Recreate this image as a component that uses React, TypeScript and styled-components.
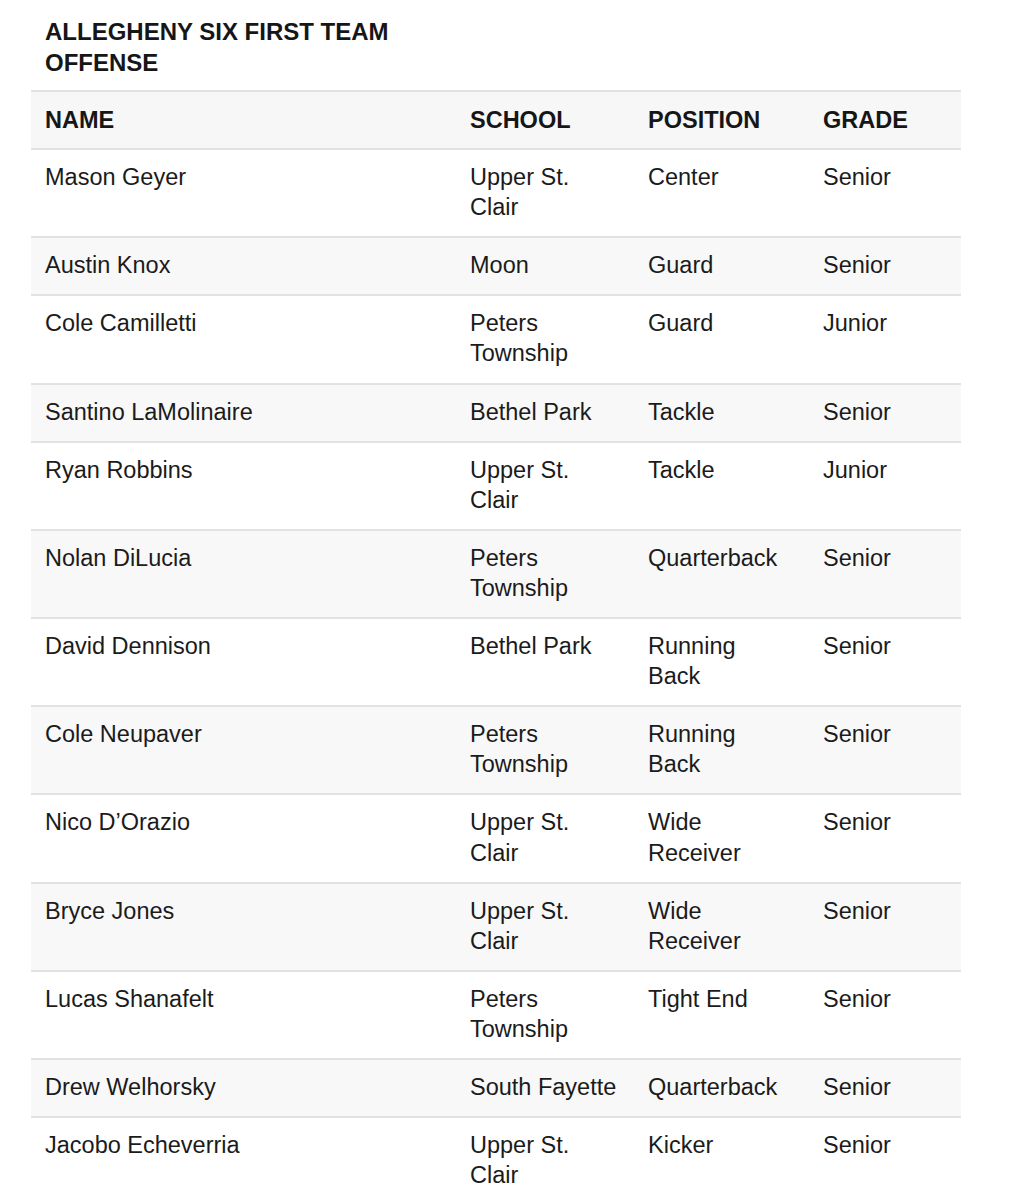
import React from "react";
import styled, { createGlobalStyle } from "styled-components";

interface Player {
  name: string;
  school: string;
  position: string;
  grade: string;
}

const players: Player[] = [
  { name: "Mason Geyer", school: "Upper St. Clair", position: "Center", grade: "Senior" },
  { name: "Austin Knox", school: "Moon", position: "Guard", grade: "Senior" },
  { name: "Cole Camilletti", school: "Peters Township", position: "Guard", grade: "Junior" },
  { name: "Santino LaMolinaire", school: "Bethel Park", position: "Tackle", grade: "Senior" },
  { name: "Ryan Robbins", school: "Upper St. Clair", position: "Tackle", grade: "Junior" },
  { name: "Nolan DiLucia", school: "Peters Township", position: "Quarterback", grade: "Senior" },
  { name: "David Dennison", school: "Bethel Park", position: "Running Back", grade: "Senior" },
  { name: "Cole Neupaver", school: "Peters Township", position: "Running Back", grade: "Senior" },
  { name: "Nico D\u2019Orazio", school: "Upper St. Clair", position: "Wide Receiver", grade: "Senior" },
  { name: "Bryce Jones", school: "Upper St. Clair", position: "Wide Receiver", grade: "Senior" },
  { name: "Lucas Shanafelt", school: "Peters Township", position: "Tight End", grade: "Senior" },
  { name: "Drew Welhorsky", school: "South Fayette", position: "Quarterback", grade: "Senior" },
  { name: "Jacobo Echeverria", school: "Upper St. Clair", position: "Kicker", grade: "Senior" },
];

const columns = [
  { key: "name", label: "NAME", width: 425, padRight: 14 },
  { key: "school", label: "SCHOOL", width: 178, padRight: 10.5 },
  { key: "position", label: "POSITION", width: 175, padRight: 25 },
  { key: "grade", label: "GRADE", width: 152, padRight: 14 },
] as const;

const GlobalStyle = createGlobalStyle`
  body {
    margin: 0;
    background: #ffffff;
    color: #161616;
    font-family: "Liberation Sans", Arial, Helvetica, sans-serif;
  }
`;

const Page = styled.main`
  padding: 16px 0 0 31px;
`;

const Title = styled.h2`
  margin: 0 0 12px;
  padding-left: 14px;
  max-width: 400px;
  font-size: 24px;
  line-height: 31px;
  font-weight: 700;
  color: #161616;
`;

const Table = styled.table`
  width: 930px;
  table-layout: fixed;
  border-collapse: collapse;
  border-spacing: 0;
`;

const HeadRow = styled.tr`
  background: #f7f7f7;
  border-top: 2px solid #e2e2e2;
`;

const Row = styled.tr`
  border-top: 2px solid #e2e2e2;
  background: #ffffff;
  &:nth-child(even) {
    background: #f8f8f8;
  }
`;

const HeadCell = styled.th<{ $padRight: number }>`
  text-align: left;
  vertical-align: top;
  padding: 13px ${(p) => p.$padRight}px 13px 14px;
  font-size: 23.5px;
  line-height: 30.1px;
  font-weight: 700;
  color: #161616;
`;

const Cell = styled.td<{ $padRight: number }>`
  vertical-align: top;
  padding: 12px ${(p) => p.$padRight}px 14px 14px;
  font-size: 23.5px;
  line-height: 30.1px;
  color: #1b1b1b;
`;

export default function App() {
  return (
    <Page>
      <GlobalStyle />
      <Title>ALLEGHENY SIX FIRST TEAM OFFENSE</Title>
      <Table>
        <colgroup>
          {columns.map((c) => (
            <col key={c.key} style={{ width: c.width }} />
          ))}
        </colgroup>
        <thead>
          <HeadRow>
            {columns.map((c) => (
              <HeadCell key={c.key} $padRight={c.padRight}>
                {c.label}
              </HeadCell>
            ))}
          </HeadRow>
        </thead>
        <tbody>
          {players.map((p) => (
            <Row key={p.name}>
              {columns.map((c) => (
                <Cell key={c.key} $padRight={c.padRight}>
                  {p[c.key]}
                </Cell>
              ))}
            </Row>
          ))}
        </tbody>
      </Table>
    </Page>
  );
}
